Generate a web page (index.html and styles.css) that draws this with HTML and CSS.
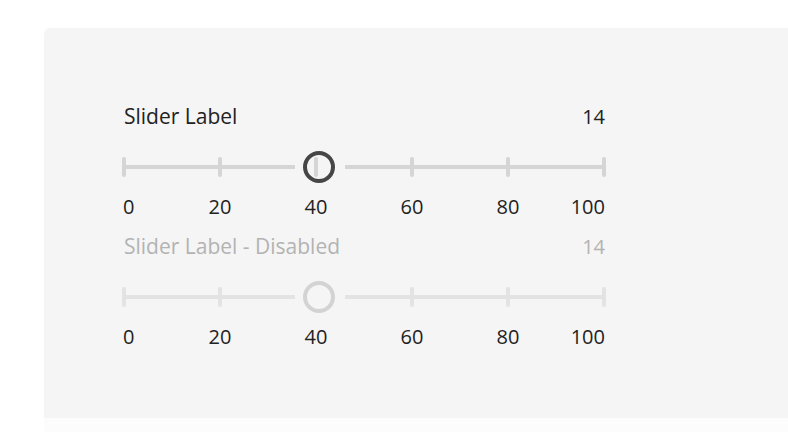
FILE: index.html
```html
<!DOCTYPE html>
<html lang="en">
<head>
<meta charset="utf-8">
<title>Slider</title>
<link rel="stylesheet" href="styles.css">
</head>
<body>
<div class="panel">
  <div class="slider">
    <div class="label-row">
      <span class="label">Slider Label</span>
      <span class="value">14</span>
    </div>
    <div class="track">
      <span class="tick"></span><span class="tick"></span><span class="tick"></span><span class="tick"></span><span class="tick"></span><span class="tick"></span>
      <span class="thumb"></span>
    </div>
    <div class="tick-labels">
      <span class="tl first">0</span><span class="tl">20</span><span class="tl">40</span><span class="tl">60</span><span class="tl">80</span><span class="tl last">100</span>
    </div>
  </div>
  <div class="slider disabled">
    <div class="label-row">
      <span class="label">Slider Label - Disabled</span>
      <span class="value">14</span>
    </div>
    <div class="track">
      <span class="tick"></span><span class="tick"></span><span class="tick"></span><span class="tick"></span><span class="tick"></span><span class="tick"></span>
      <span class="thumb"></span>
    </div>
    <div class="tick-labels">
      <span class="tl first">0</span><span class="tl">20</span><span class="tl">40</span><span class="tl">60</span><span class="tl">80</span><span class="tl last">100</span>
    </div>
  </div>
</div>
<div class="strip"></div>
</body>
</html>
```

FILE: styles.css
```css
html, body {
  margin: 0;
  padding: 0;
  background: #ffffff;
  font-family: "Open Sans", "Noto Sans", sans-serif;
  font-size: 20px;
  color: #222222;
  overflow: hidden;
}

.panel {
  margin: 28px 0 0 44px;
  height: 390px;
  box-sizing: border-box;
  padding: 74px 0 0 78px;
  background: #f5f5f5;
  border-top-left-radius: 6px;
  display: flex;
  flex-direction: column;
}

.strip {
  margin-left: 44px;
  height: 14px;
  background: #fcfcfc;
}

.slider {
  width: 484px;
  height: 130px;
  display: flex;
  flex-direction: column;
}

.label-row {
  display: flex;
  justify-content: space-between;
  align-items: baseline;
  height: 28px;
  line-height: 28px;
  padding: 0 1px 0 2px;
}

.label {
  font-size: 21px;
}

.track {
  position: relative;
  margin-top: 21px;
  height: 32px;
  display: flex;
  align-items: center;
  justify-content: space-between;
  background: linear-gradient(to right, #d5d5d5 0 173px, transparent 173px 223px, #d5d5d5 223px) no-repeat center / 100% 4px;
}

.tick {
  width: 4px;
  height: 20px;
  border-radius: 2px;
  background: #d5d5d5;
}

.thumb {
  position: absolute;
  left: 181px;
  top: 0;
  width: 32px;
  height: 32px;
  box-sizing: border-box;
  border: 4px solid #464646;
  border-radius: 50%;
}

.tick-labels {
  margin: 10px 0 0 -46px;
  display: grid;
  grid-template-columns: repeat(6, 96px);
  height: 28px;
  line-height: 28px;
}

.tl {
  text-align: center;
}

.tl.first {
  text-align: left;
  padding-left: 47px;
}

.tl.last {
  text-align: right;
  padding-right: 47px;
}

.disabled .label-row {
  color: #b3b3b3;
}

.disabled .track {
  background: linear-gradient(to right, #e3e3e3 0 173px, transparent 173px 223px, #e3e3e3 223px) no-repeat center / 100% 4px;
}

.disabled .tick {
  background: #e3e3e3;
}

.disabled .thumb {
  border-color: #d3d3d3;
  background: #f5f5f5;
}
```
